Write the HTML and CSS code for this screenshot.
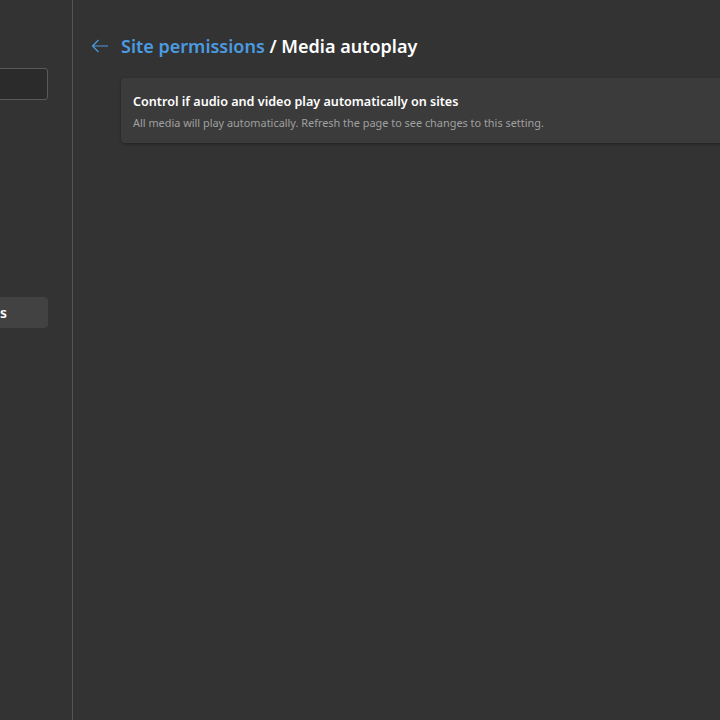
FILE: index.html
```html
<!DOCTYPE html>
<html lang="en">
<head>
    <meta charset="UTF-8">
    <meta name="viewport" content="width=device-width, initial-scale=1.0">
    <title>Settings - Media autoplay</title>
    <link rel="stylesheet" href="styles.css">
</head>
<body>
    <div class="layout">
        <!-- Menu lateral (cortado) -->
        <aside class="sidebar">
            <div class="search"></div>
            <nav class="nav">
                <div class="nav-item active">Cookies and site permissions</div>
            </nav>
        </aside>

        <main class="content">
            <div class="header">
                <svg class="back" width="18" height="14" viewBox="0 0 18 14">
                    <path d="M17 7H1.5M7.5 1L1.5 7l6 6" fill="none" stroke="#4a9be0" stroke-width="1.2"/>
                </svg>
                <h1><span class="crumb">Site permissions</span> / Media autoplay</h1>
            </div>

            <div class="card">
                <div class="card-title">Control if audio and video play automatically on sites</div>
                <div class="card-desc">All media will play automatically. Refresh the page to see changes to this setting.</div>
            </div>
        </main>
    </div>
</body>
</html>
```

FILE: styles.css
```css
/* Layout geral */
body {
    margin: 0;
    background-color: #333333;
    color: #ffffff;
    font-family: "Noto Sans", "Open Sans", sans-serif;
    height: 720px;
    overflow: hidden;
}
.layout {
    display: flex;
    height: 100%;
}

/* Menu lateral */
.sidebar {
    width: 73px;
    flex-shrink: 0;
    border-right: 1px solid #555555;
    overflow: hidden;
    display: flex;
    flex-direction: column;
    align-items: flex-end;
    padding-top: 68px;
    padding-right: 24px;
    box-sizing: border-box;
}
.search {
    width: 280px;
    height: 32px;
    flex-shrink: 0;
    box-sizing: border-box;
    background-color: #2b2b2b;
    border: 1px solid #5a5a5a;
    border-radius: 3px;
}
.nav {
    margin-top: 197px;
}
.nav-item {
    width: 280px;
    height: 31px;
    line-height: 31px;
    font-size: 14px;
    text-align: right;
    padding-right: 41px;
    box-sizing: border-box;
    border-radius: 4px;
    white-space: nowrap;
}
.nav-item.active {
    background-color: #424242;
    font-weight: 600;
}

/* Conteúdo */
.content {
    flex: 1;
    padding: 30px 0 0 18px;
    min-width: 0;
}
.header {
    display: flex;
    align-items: center;
    gap: 12px;
    height: 32px;
}
.back {
    display: block;
}
h1 {
    margin: 0;
    font-size: 18px;
    font-weight: 600;
    white-space: nowrap;
}
.crumb {
    color: #4a9be0;
}

/* Cartão */
.card {
    margin: 16px -40px 0 30px;
    background-color: #3b3b3b;
    border-radius: 4px;
    box-shadow: 0 1px 3px rgba(0, 0, 0, 0.35);
    padding: 15px 12px 12px;
    height: 65px;
    box-sizing: border-box;
}
.card-title {
    font-size: 12.6px;
    font-weight: 600;
    line-height: 18px;
}
.card-desc {
    font-size: 10.9px;
    color: #a0a0a0;
    line-height: 18px;
    margin-top: 3px;
}
```
